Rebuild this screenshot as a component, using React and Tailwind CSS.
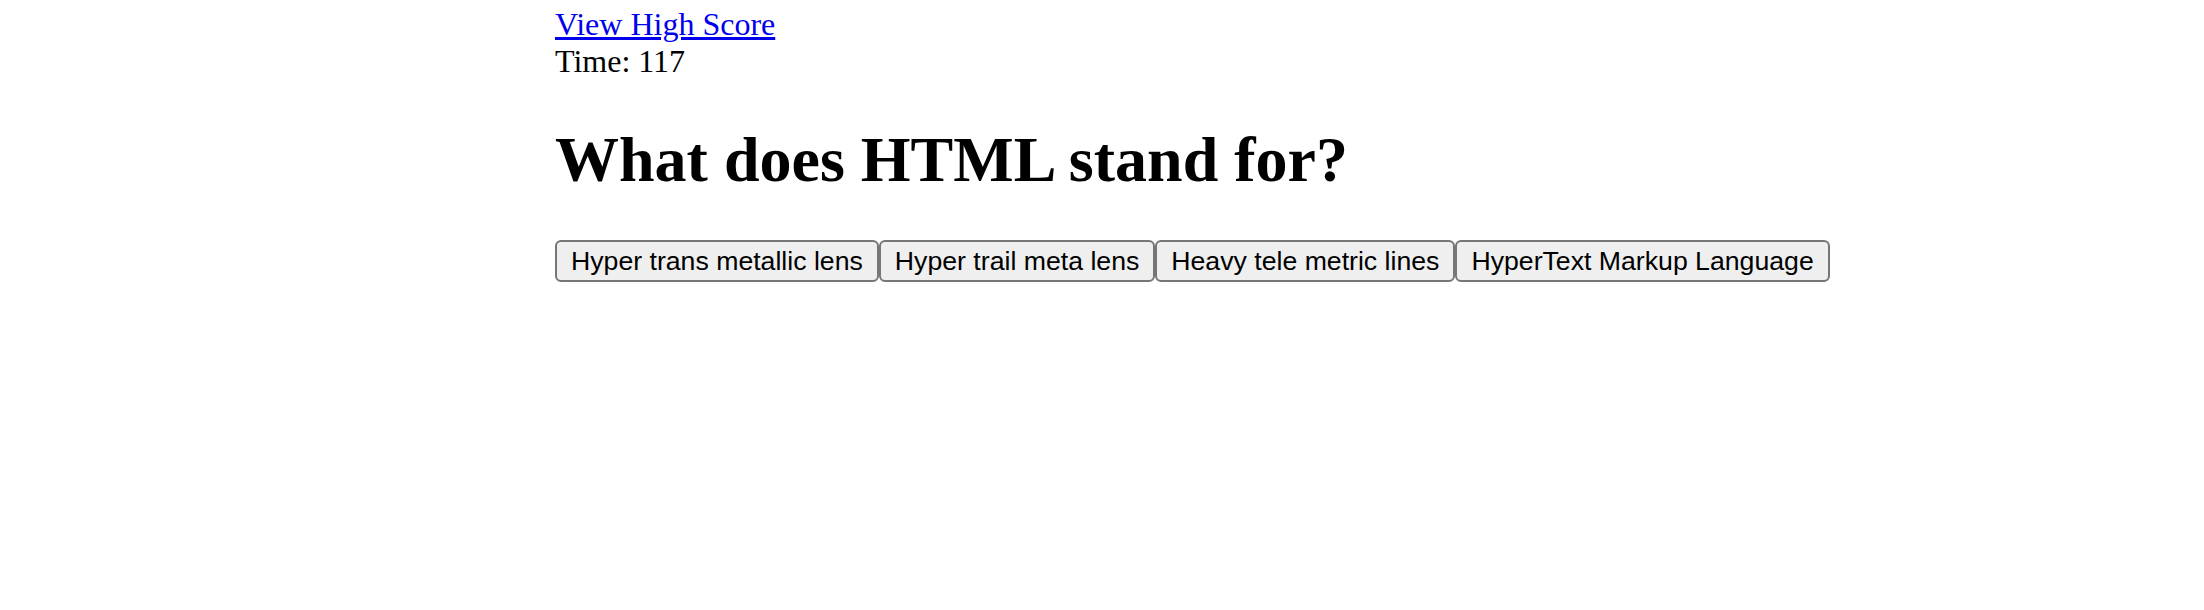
import React, { useState } from 'react';

const answers = [
  'Hyper trans metallic lens',
  'Hyper trail meta lens',
  'Heavy tele metric lines',
  'HyperText Markup Language',
];

export default function App() {
  const [time] = useState(117);

  return (
    <div className="min-h-screen bg-white text-black font-['Liberation_Serif',serif]">
      <div className="mx-auto w-[1094px] pt-[6px] text-[32px] leading-[1.149]">
        <div>
          <a href="#" className="text-[#0000ee] underline">View High Score</a>
        </div>
        <div>Time: {time}</div>

        <h1 className="mt-[43px] mb-[44px] text-[64px] font-bold leading-[1.149]">What does HTML stand for?</h1>

        <div className="flex w-max">
          {answers.map(a => (
            <button
              key={a}
              className="shrink-0 whitespace-nowrap h-[42px] px-[14px] bg-[#efefef] border-2 border-[#767676] rounded-[6px] text-[26.67px] leading-none text-black font-['Liberation_Sans',Arial,sans-serif]"
            >
              {a}
            </button>
          ))}
        </div>
      </div>
    </div>
  );
}
